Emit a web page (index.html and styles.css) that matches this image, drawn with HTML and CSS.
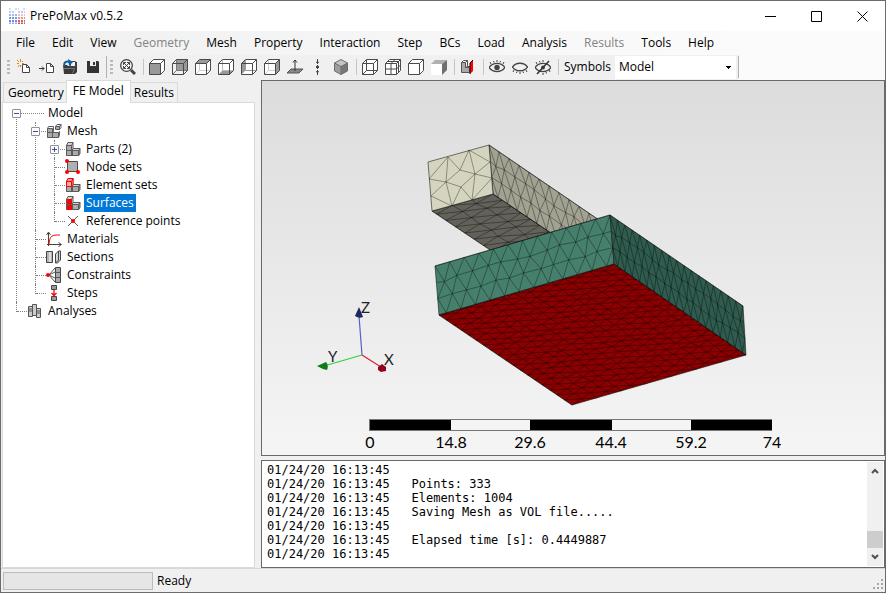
FILE: index.html
```html
<!DOCTYPE html>
<html lang="en">
<head>
<meta charset="utf-8">
<title>PrePoMax v0.5.2</title>
<link rel="stylesheet" href="styles.css">
</head>
<body>
<svg class="defs" aria-hidden="true">
  <defs>
    <symbol id="cube-frame" viewBox="0 0 16 16">
      <path d="M.5 4.500h11v11h-11zM.5 4.500l4-4h11v11l-4 4M11.500 4.500l4-4" fill="none" stroke="#4a4a4a"/>
    </symbol>
    <symbol id="blocks" viewBox="0 0 16 16">
      <path d="M1 4h6v5h7v6H1z" fill="#ababab"/>
      <path d="M1 4l2-3h5L7 4zM7 4l1-3v6L7 9zM7 9l2-2h6l-1 2z" fill="#d4d4d4"/>
      <path d="M14 9l1-2v6l-1 2z" fill="#888"/>
      <path d="M1.500 4.500h5v5h7v5h-12zM1.500 9.500h5v5M7.500 10v4M1.500 4.500l1.500-3h5v6l-1 2M6.500 4.500l1.500-3M8 7.500h7v5l-1.500 2M13.500 9.500l1.500-2" fill="none" stroke="#5a5a5a"/>
    </symbol>
  </defs>
</svg>
<div class="window">
  <header class="titlebar">
    <svg class="logo" viewBox="0 0 16 16" aria-hidden="true">
      <g stroke-width="2" stroke-dasharray="2 1" fill="none">
        <path d="M0 1h2M6 1h4M14 1h2" stroke="#d9dcf2"/>
        <path d="M0 4h5M9 4h7" stroke="#c3cbee"/>
        <path d="M0 7h8" stroke="#a0b6ec"/><path d="M9 7h7" stroke="#f0c0bd"/>
        <path d="M0 10h8" stroke="#7898e4"/><path d="M9 10h7" stroke="#e39590"/>
        <path d="M0 13h8" stroke="#688de4"/><path d="M9 13h7" stroke="#d8635c"/>
        <path d="M0 15.500h8" stroke="#96aff0"/><path d="M9 15.500h7" stroke="#cc5a52"/>
      </g>
    </svg>
    <h1 class="title">PrePoMax v0.5.2</h1>
    <button class="caption" aria-label="Minimize"><svg viewBox="0 0 11 11"><path d="M0 5.500h11"/></svg></button>
    <button class="caption" aria-label="Maximize"><svg viewBox="0 0 11 11"><path d="M.5.5h10v10H.5z"/></svg></button>
    <button class="caption" aria-label="Close"><svg viewBox="0 0 11 11"><path d="M.5.5l10 10M10.500.5l-10 10"/></svg></button>
  </header>

  <nav class="menubar">
    <button>File</button><button>Edit</button><button>View</button><button disabled>Geometry</button><button>Mesh</button><button>Property</button><button>Interaction</button><button>Step</button><button>BCs</button><button>Load</button><button>Analysis</button><button disabled>Results</button><button>Tools</button><button>Help</button>
  </nav>

  <div class="toolbar">
    <div class="strip">
      <span class="grip"></span>
      <button class="tool" aria-label="New"><svg viewBox="0 0 16 16"><path d="M6.500 5.500h4l3 3v5h-7zM10.500 5.500v3h3" fill="#fff" stroke="#444"/><path d="M4.500 0v3M1 4.500h2M7 2L6 3M1 1l2 2M2 8l1.500-2M8 4.500h-2M4.500 6v2" stroke="#d18a28" fill="none"/></svg></button>
      <button class="tool" aria-label="Import"><svg viewBox="0 0 16 16"><path d="M7.500 4.500h4l3 3v6h-7zM11.500 4.500v3h3" fill="#fff" stroke="#444"/><path d="M0 9.500h5M3 7.500l2 2-2 2" stroke="#333" fill="none"/></svg></button>
      <button class="tool" aria-label="Open"><svg viewBox="0 0 16 16"><path d="M1 6h4l1 1h7V3h2v10l-2 2H2z" fill="#3a3a3a"/><path d="M2 9.500h10.500l-2 5" fill="none" stroke="#777"/><path d="M8.500 2.500h5v5h-5z" fill="#f0f0f0" stroke="#444"/><path d="M2.500 7c-1-4 2-5 5-4" fill="none" stroke="#1260a8" stroke-width="2"/><path d="M6 0l5 3-4 4z" fill="#1260a8"/></svg></button>
      <button class="tool" aria-label="Save"><svg viewBox="0 0 16 16"><path d="M2 2h11l1 1v11H2z" fill="#333"/><path d="M5 2h6v5H5z" fill="#f0f0f0"/><path d="M8 3h2v3H8z" fill="#333"/></svg></button>
      <span class="strip-end"></span>
    </div>
    <div class="strip">
      <span class="grip"></span>
      <button class="tool" aria-label="Zoom to fit"><svg viewBox="0 0 16 16"><circle cx="6.500" cy="6.500" r="5.800" fill="#f4f4f4" stroke="#444" stroke-width="1.300"/><path d="M11 11l4 4" stroke="#444" stroke-width="3"/><path d="M4 4l5 5M9 4L4 9M3.500 6V3.500H6M7 3.500h2.500V6M9.500 7v2.500H7M6 9.500H3.500V7" fill="none" stroke="#444"/></svg></button>
      <span class="sep"></span>
      <button class="tool" aria-label="Front view"><svg viewBox="0 0 16 16"><path d="M.5 4.500l4-4h11v11l-4 4" fill="#fff"/><path d="M.5 4.500h11v11H.5z" fill="#999"/><use href="#cube-frame"/></svg></button>
      <button class="tool" aria-label="Back view"><svg viewBox="0 0 16 16"><path d="M4.500.5h11v11h-11z" fill="#999"/><path d="M4.500.5v11h11M4.500 11.500l-4 4" stroke="#777" fill="none"/><use href="#cube-frame"/></svg></button>
      <button class="tool" aria-label="Top view"><svg viewBox="0 0 16 16"><path d="M.5 4.500h11l4-4v11l-4 4H.5z" fill="#fff"/><path d="M.5 4.500l4-4h11l-4 4z" fill="#999"/><path d="M4.500 5v6.500h11M4.500 11.500l-4 4" stroke="#ccc" fill="none"/><use href="#cube-frame"/></svg></button>
      <button class="tool" aria-label="Bottom view"><svg viewBox="0 0 16 16"><path d="M.5 4.500l4-4h11v11l-4 4H.5z" fill="#fff"/><path d="M.5 15.500l4-4h11l-4 4z" fill="#999"/><path d="M4.500 1v10.500h11" stroke="#bbb" fill="none"/><use href="#cube-frame"/></svg></button>
      <button class="tool" aria-label="Left view"><svg viewBox="0 0 16 16"><path d="M.5 4.500l4-4h11v11l-4 4H.5z" fill="#fff"/><path d="M.5 15.500v-11l4-4v11z" fill="#999"/><path d="M4.500 1v10.500h11" stroke="#999" fill="none"/><use href="#cube-frame"/></svg></button>
      <button class="tool" aria-label="Right view"><svg viewBox="0 0 16 16"><path d="M.5 4.500l4-4h11v11l-4 4H.5z" fill="#fff"/><path d="M11.500 15.500v-11l4-4v11z" fill="#999"/><path d="M4.500 1v10.500h7M4.500 11.500l-4 4" stroke="#ccc" fill="none"/><use href="#cube-frame"/></svg></button>
      <button class="tool" aria-label="Normal view"><svg viewBox="0 0 16 16"><path d="M0 14l4-4h12l-4 4z" fill="#888" stroke="#555"/><path d="M8 12V1M6 3.500L8 1l2 2.500" fill="none" stroke="#333"/></svg></button>
      <button class="tool" aria-label="Vertical view"><svg viewBox="0 0 16 16"><path d="M7.500 0v16" stroke="#444" stroke-dasharray="5 1 4 1"/><path d="M6 4l1.500-3L9 4zM6 12l1.500 3L9 12zM6 7h3v2H6z" fill="#444"/></svg></button>
      <button class="tool" aria-label="Isometric view"><svg viewBox="0 0 16 16"><path d="M8 .5l6.500 3.500L8 7.500 1.500 4z" fill="#c4c4c4"/><path d="M1.500 4L8 7.500v8L1.500 12z" fill="#9d9d9d"/><path d="M14.500 4L8 7.500v8l6.500-3.500z" fill="#777"/><path d="M8 .5l6.500 3.500v8L8 15.500 1.500 12V4zM1.500 4L8 7.500 14.500 4M8 7.500v8" fill="none" stroke="#6c6c6c"/></svg></button>
      <span class="sep"></span>
      <button class="tool" aria-label="Wireframe"><svg viewBox="0 0 16 16"><path d="M.5 4.500l4-4h11v11l-4 4H.5z" fill="#fff"/><path d="M4.500.5v11h11M4.500 11.500l-4 4" fill="none" stroke="#4a4a4a"/><use href="#cube-frame"/></svg></button>
      <button class="tool" aria-label="Element edges"><svg viewBox="0 0 16 16"><path d="M.5 4.500l4-4h11v11l-4 4H.5z" fill="#fff"/><path d="M6 4.500v11M.5 10h11l4-4M2.500 2.500h11v11M10 .5l-4 4" fill="none" stroke="#4a4a4a"/><use href="#cube-frame"/></svg></button>
      <button class="tool" aria-label="Model edges"><svg viewBox="0 0 16 16"><path d="M.5 4.500l4-4h11v11l-4 4H.5z" fill="#fff"/><use href="#cube-frame"/></svg></button>
      <button class="tool" aria-label="No edges"><svg viewBox="0 0 16 16"><path d="M0 5h11v11H0z" fill="#fff"/><path d="M0 5l4-4h12l-5 4z" fill="#b0b0b0"/><path d="M11 5l5-4v10l-5 5z" fill="#707070"/></svg></button>
      <span class="sep"></span>
      <button class="tool" aria-label="Section view"><svg viewBox="0 0 16 16"><path d="M1.500 3.500h4v5h4v5h-8z" fill="#a8a8a8" stroke="#555"/><path d="M1.500 3.500l2-2h4v6h3M5.500 3.500l2-2M5.500 8.500l2-1" fill="none" stroke="#555"/><path d="M10 4l3-3v11l-3 3z" fill="#f00"/><path d="M10 15V4l3-3" fill="none" stroke="#200"/></svg></button>
      <span class="sep"></span>
      <button class="tool" aria-label="Hide"><svg viewBox="0 0 16 16"><path d="M0 8.500C4 3 12 3 16 8.500 12 14 4 14 0 8.500z" fill="#eee" stroke="#444" stroke-width="1.300"/><circle cx="8" cy="8.500" r="2.700" fill="#444"/><path d="M2 5L1 3M5 3.500L4.500 2M8 3V1M11 3.500l.5-1.500M14 5l1-2" stroke="#444"/></svg></button>
      <button class="tool" aria-label="Show"><svg viewBox="0 0 16 16"><path d="M.5 8C4 3 12 3 15.500 8 12 13 4 13 .5 8z" fill="none" stroke="#444" stroke-width="1.300"/><path d="M2 11l-1 2M5 12.500L4.500 14M8 13v2M11 12.500l.5 1.500M14 11l1 2" stroke="#444"/></svg></button>
      <button class="tool" aria-label="Invert visibility"><svg viewBox="0 0 16 16"><path d="M0 8.500C4 3 12 3 16 8.500 12 14 4 14 0 8.500z" fill="none" stroke="#444" stroke-width="1.300"/><circle cx="8" cy="8.500" r="2" fill="#444"/><path d="M2 5L1 3M5 3.500L4.500 2M8 3V1M14 11l1 2M11 13l.5 1.500M8 14v2" stroke="#444"/><path d="M14 2L2 15" stroke="#333" stroke-width="1.500"/></svg></button>
      <span class="sep"></span>
      <label for="symbols">Symbols</label>
      <select id="symbols"><option>Model</option></select>
      <span class="strip-end"></span>
    </div>
  </div>

  <main class="workspace">
    <aside class="side">
      <div class="tabs" role="tablist">
        <button role="tab" aria-selected="false">Geometry</button>
        <button role="tab" aria-selected="true">FE Model</button>
        <button role="tab" aria-selected="false">Results</button>
      </div>
      <div class="tree-pane">
        <ul class="tree">
          <li><div class="node wide"><button class="toggle" aria-label="Collapse"></button><span class="icon"></span><span class="label">Model</span></div>
            <ul>
              <li><div class="node"><button class="toggle" aria-label="Collapse"></button>
                <svg class="icon" viewBox="0 0 16 16"><path d="M1 5.500h5v4h6v5H1zM10 3h4v4h-4z" fill="#aaa"/><path d="M1.500 5.500h5v4h6v5h-11zM1.500 9.500h5v5M1.500 5.500l1-2h5v5l-1 1M12.500 9.500l1-1v4l-1 2M9.500 3.500h4v3h-4zM9.500 3.500l1.500-2h4v3l-1.500 2M13.500 3.500l1.500-2" fill="none" stroke="#5a5a5a"/></svg>
                <span class="label">Mesh</span></div>
                <ul>
                  <li><div class="node"><button class="toggle closed" aria-label="Expand"></button><svg class="icon" viewBox="0 0 16 16"><use href="#blocks"/></svg><span class="label">Parts (2)</span></div></li>
                  <li><div class="node"><svg class="icon" viewBox="0 0 16 16"><path d="M2.500 2.500h10v10h-10z" fill="#b0b0b0" stroke="#4b4b4b"/><g fill="#f00"><circle cx="2" cy="2" r="2"/><circle cx="2" cy="13" r="2"/><circle cx="13" cy="13" r="2"/></g></svg><span class="label">Node sets</span></div></li>
                  <li><div class="node"><svg class="icon" viewBox="0 0 16 16"><use href="#blocks"/><path d="M1 4l2-3h5v6L7 9H1z" fill="#ffaaaa"/><path d="M1.500 4.500h5v5h-5zM1.500 4.500l1.500-3h5v6l-1.500 2M6.500 4.500l1.500-3" fill="none" stroke="#f00"/></svg><span class="label">Element sets</span></div></li>
                  <li><div class="node selected"><svg class="icon" viewBox="0 0 16 16"><use href="#blocks"/><path d="M2 4h5v5H2zM2 10h5v5H2z" fill="#f00"/></svg><span class="label">Surfaces</span></div></li>
                  <li><div class="node"><svg class="icon" viewBox="0 0 16 16"><path d="M3 3l10 10M13 3L3 13" stroke="#555"/><circle cx="8" cy="8" r="2" fill="#f00"/></svg><span class="label">Reference points</span></div></li>
                </ul>
              </li>
              <li><div class="node"><svg class="icon" viewBox="0 0 16 16"><path d="M2.500 15V2M.5 4l2-3 2 3M1 13.500h14M12.500 11.500l3 2-3 2" fill="none" stroke="#444"/><path d="M3 13C4 4 6 4 14 4" fill="none" stroke="#f00"/></svg><span class="label">Materials</span></div></li>
              <li><div class="node"><svg class="icon" viewBox="0 0 16 16"><path d="M.5 2.500h6v11h-6z" fill="#b5b5b5" stroke="#444"/><path d="M3 3h2v10H3z" fill="#ddd"/><path d="M9.500 5l3-3v9l-3 3zM12.500 2h2v9l-3 3h-2" fill="#d5d5d5" stroke="#444"/></svg><span class="label">Sections</span></div></li>
              <li><div class="node"><svg class="icon" viewBox="0 0 16 16"><path d="M9.500.5h5v15h-5z" fill="#aaa" stroke="#444"/><path d="M9 5.500h6M9 10.500h6M9 1L3 8l6 7M3 8l6-3M3 8l6 3" stroke="#555" fill="none"/><circle cx="2" cy="8" r="2" fill="#f00"/></svg><span class="label">Constraints</span></div></li>
              <li><div class="node"><svg class="icon" viewBox="0 0 16 16"><path d="M5.500.5h5v4h-5zM5.500 11.500h5v4h-5z" fill="#999" stroke="#444"/><path d="M8 5v5M5.500 8L8 10.500 10.500 8" fill="none" stroke="#f00" stroke-width="1.300"/></svg><span class="label">Steps</span></div></li>
            </ul>
          </li>
          <li><div class="node"><svg class="icon" viewBox="0 0 16 16"><g fill="#ccc" stroke="#555"><path d="M5.500 1.500h4v11h-4zM1.500 3.500h4v10h-4zM9.500 5.500h4v9h-4z"/><path d="M2 6h3M2 8h3M10 8h3M10 10h3"/></g></svg><span class="label">Analyses</span></div></li>
        </ul>
      </div>
    </aside>

    <div class="content">
      <section class="viewport">
        <svg class="scene" viewBox="262 81 622 374" role="img" aria-label="Finite element mesh">
          <g id="model"></g>
          <g class="axes">
            <path d="M362 355L359 316" stroke="#5560c8"/>
            <path d="M362 355l-38 11" stroke="#30d040"/>
            <path d="M362 355l19 12" stroke="#d82040"/>
            <path d="M359 307l-4 9q4 3 8 1z" fill="#1c2766"/>
            <path d="M317 366l9-4q3 3 1 8l-4-1z" fill="#137a1c"/>
            <path d="M378 367l4-3 4 3v4l-5 1-3-2z" fill="#95001c"/>
            <text x="361" y="313">Z</text>
            <text x="328" y="362">Y</text>
            <text x="384" y="365">X</text>
          </g>
          <g class="scale">
            <rect x="369.500" y="419.500" width="402" height="11" fill="#f4f4f4" stroke="#777"/>
            <path d="M370 420h81v10h-81zM530 420h82v10h-82zM691 420h81v10h-81z"/>
            <text x="370" y="448">0</text><text x="451" y="448">14.8</text><text x="530" y="448">29.6</text><text x="611" y="448">44.4</text><text x="691" y="448">59.2</text><text x="772" y="448">74</text>
          </g>
        </svg>
      </section>
      <section class="log">
        <textarea readonly aria-label="Output">01/24/20 16:13:45
01/24/20 16:13:45   Points: 333
01/24/20 16:13:45   Elements: 1004
01/24/20 16:13:45   Saving Mesh as VOL file.....
01/24/20 16:13:45
01/24/20 16:13:45   Elapsed time [s]: 0.4449887
01/24/20 16:13:45</textarea>
        <div class="scrollbar">
          <button aria-label="Scroll up"><svg viewBox="0 0 8 6"><path d="M1 5l3-3 3 3"/></svg></button>
          <span class="thumb"></span>
          <button aria-label="Scroll down"><svg viewBox="0 0 8 6"><path d="M1 1l3 3 3-3"/></svg></button>
        </div>
      </section>
    </div>
  </main>

  <footer class="status">
    <progress value="0" max="100" aria-label="Progress"></progress>
    <span>Ready</span>
    <svg class="size-grip" viewBox="0 0 11 11" aria-hidden="true"><path d="M8 0h2v2H8zM4 4h2v2H4zM8 4h2v2H8zM0 8h2v2H0zM4 8h2v2H4zM8 8h2v2H8z" fill="#a8a8a8"/></svg>
  </footer>
</div>
<script src="mesh.js"></script>
</body>
</html>
```
FILE: styles.css
```css
* { box-sizing: border-box; }
body { margin: 0; font: 12px/18px "Open Sans", "Noto Sans", sans-serif; color: #000; }
button { font: inherit; color: inherit; background: none; border: 0; padding: 0; margin: 0; }
ul { list-style: none; margin: 0; padding: 0; }
.defs { position: absolute; width: 0; height: 0; }

.window { display: flex; flex-direction: column; height: 100vh; border: 1px solid #6b6b6b; background: #f0f0f0; overflow: hidden; }

.titlebar { display: flex; align-items: center; height: 30px; flex: none; background: #fff; padding-left: 8px; }
.logo { width: 16px; height: 16px; margin-right: 5px; }
.title { font-size: 12px; font-weight: 400; margin: 0; flex: 1; }
.caption { width: 46px; height: 28px; display: grid; place-items: center; }
.caption svg { width: 11px; height: 11px; fill: none; stroke: #000; }

.menubar, .toolbar { flex: none; display: flex; background: linear-gradient(90deg, #f0f0f0, #fbfbfb 85%); }
.menubar { height: 24px; padding-left: 7px; }
.menubar button { padding: 0 8px; }
.menubar button + button { padding-left: 9px; }
.menubar button:disabled { color: #838383; }

.toolbar { height: 25px; }
.strip { display: flex; flex: none; align-items: center; background: #f0f0f0; padding-bottom: 1px; }
.grip { width: 3px; height: 15px; margin: 0 2px 0 6px; background: repeating-linear-gradient(#b8b8b8 0 2px, transparent 2px 4px); }
.strip + .strip .grip { margin: 0 3px; }
.tool { width: 23px; height: 24px; display: grid; place-items: center; }
.tool svg { width: 16px; height: 16px; }
.sep { width: 6px; height: 16px; border-left: 1px solid #c4c4c4; margin-left: 4px; margin-right: -4px; }
.strip-end { width: 3px; height: 22px; border-right: 1px solid #b0b0b0; }
.strip label { margin: 0 4px; }
select {
  width: 121px; height: 23px; border: 0; padding: 0 4px; font: inherit; color: #000; border-radius: 0; appearance: none;
  background: linear-gradient(#000, #000) no-repeat 111px 10px / 5px 1px,
    linear-gradient(#000, #000) no-repeat 112px 11px / 3px 1px,
    linear-gradient(#000, #000) no-repeat 113px 12px / 1px 1px, #fff;
}

.workspace { flex: 1; min-height: 0; display: flex; gap: 6px; }
.side { width: 254px; flex: none; display: flex; flex-direction: column; padding-left: 1px; }
.tabs { display: flex; align-items: flex-end; height: 22px; padding-left: 1px; flex: none; }
.tabs button { height: 20px; padding: 0 4px; border: 1px solid #dadada; border-bottom: 0; white-space: nowrap; }
.tabs button + button { padding: 0 3px; }
.tabs button:first-child { padding: 0 2px 0 4px; }
.tabs button[aria-selected="true"] { height: 23px; padding: 0 6px 2px; background: #fff; position: relative; margin: 0 -1px -1px; }
.tree-pane { flex: 1; background: #fff; border: 1px solid #dadada; padding: 1px 0 0 4px; overflow: hidden; }

.tree li { position: relative; }
.tree li::before { content: ""; position: absolute; left: 9px; top: 0; bottom: 0; border-left: 1px dotted #808080; }
.tree > li:first-child::before { top: 9px; }
.tree li:last-child::before { bottom: auto; height: 10px; }
.tree li > ul { padding-left: 19px; }
.node { position: relative; height: 18px; display: flex; align-items: center; padding-left: 20px; }
.node::before { content: ""; position: absolute; left: 10px; top: 9px; width: 10px; border-top: 1px dotted #808080; }
.node.wide::before { width: 27px; }
.icon { width: 16px; height: 16px; margin-right: 3px; flex: none; }
.label { padding: 0 2px; white-space: nowrap; }
.selected .label { background: #0078d7; color: #fff; }
.toggle { position: absolute; left: 5px; top: 5px; width: 9px; height: 9px; border: 1px solid #919191; border-radius: 1px;
  background: linear-gradient(#3550a8, #3550a8) no-repeat 1px 3px / 5px 1px, #fcfcfc; }
.toggle.closed { background: linear-gradient(#3550a8, #3550a8) no-repeat 1px 3px / 5px 1px, linear-gradient(#3550a8, #3550a8) no-repeat 3px 1px / 1px 5px, #fcfcfc; }

.content { flex: 1; min-width: 0; display: flex; flex-direction: column; gap: 4px; }
.viewport { flex: 1; min-height: 0; border: 1px solid #696969; background: linear-gradient(#dcdcdc, #f5f5f5); }
.scene { display: block; width: 100%; height: 100%; }
.mesh { fill: none; stroke: #000; stroke-opacity: .5; stroke-width: .7; }
.outline { fill: none; stroke: #111; stroke-opacity: .8; stroke-width: .7; }
.axes path { stroke-width: 1.2; }
.axes text { font: 15px Lato, sans-serif; fill: #222; }
.scale text { font: 16px Lato, sans-serif; text-anchor: middle; }

.log { flex: none; height: 108px; display: flex; border: 1px solid #696969; background: #fff; padding: 1px; }
.log textarea { flex: 1; min-width: 0; border: 0; outline: 0; resize: none; overflow: hidden; padding: 1px 4px; font: 12px/14px "DejaVu Sans Mono", monospace; color: #000; background: #fff; }
.scrollbar { width: 16px; display: flex; flex-direction: column; background: #f0f0f0; }
.scrollbar button { height: 18px; display: grid; place-items: center; }
.scrollbar svg { width: 8px; height: 6px; fill: none; stroke: #505050; stroke-width: 2; }
.thumb { height: 17px; margin-top: auto; background: #cdcdcd; }

.status { flex: none; height: 24px; display: flex; align-items: center; padding-left: 2px; border-top: 1px solid #d7d7d7; }
progress { appearance: none; width: 150px; height: 18px; border: 1px solid #bcbcbc; background: #e6e6e6; margin-right: 4px; }
progress::-webkit-progress-bar { background: #e6e6e6; }
.size-grip { width: 11px; height: 11px; margin: 8px 1px 0 auto; }
```
FILE: mesh.js
```js
// Draws each visible face of the two parts with its surface triangulation.
const NS = "http://www.w3.org/2000/svg";
const model = document.getElementById("model");

function add(tag, attrs) {
  const el = document.createElementNS(NS, tag);
  for (const key in attrs) el.setAttribute(key, attrs[key]);
  model.appendChild(el);
}

// Deterministic noise in the range -0.5 .. 0.5.
function noise(a, b) {
  const s = Math.sin(a * 12.9898 + b * 78.233) * 43758.5453;
  return s - Math.floor(s) - 0.5;
}

// Corners run a -> b along u and a -> d along v.
function face(a, b, c, d, fill, cols, rows) {
  add("polygon", { points: [a, b, c, d].join(" "), fill });
  const grid = [];
  for (let r = 0; r <= rows; r++) {
    const row = [];
    const odd = r % 2;
    const count = odd ? cols + 2 : cols + 1;
    for (let i = 0; i < count; i++) {
      let u = odd ? Math.min(Math.max(i - 0.5, 0), cols) : i;
      let v = r;
      const inner = r > 0 && r < rows && i > 0 && i < count - 1;
      if (inner) {
        u += noise(r, i) * 0.22;
        v += noise(i, r + 7) * 0.22;
      }
      u /= cols;
      v /= rows;
      row.push([0, 1].map(k =>
        (1 - v) * ((1 - u) * a[k] + u * b[k]) + v * ((1 - u) * d[k] + u * c[k])));
    }
    grid.push(row);
  }
  let path = "";
  const line = (p, q) => { path += `M${p[0].toFixed(1)} ${p[1].toFixed(1)}L${q[0].toFixed(1)} ${q[1].toFixed(1)}`; };
  grid.forEach((row, r) => {
    for (let i = 1; i < row.length; i++) line(row[i - 1], row[i]);
    if (r % 2) {
      [grid[r - 1], grid[r + 1]].forEach(other => {
        if (!other) return;
        for (let i = 1; i <= cols; i++) {
          line(row[i], other[i - 1]);
          line(row[i], other[i]);
        }
      });
    }
  });
  add("path", { d: path, class: "mesh" });
  add("polygon", { points: [a, b, c, d].join(" "), class: "outline" });
}

// Upper part
face([493, 194], [596, 263], [535, 280], [432, 211], "#62625a", 11, 3);
face([489, 145], [599, 220], [600, 266], [493, 194], "#a2a292", 11, 3);
add("polygon", { points: "428,162 489,145 493,194 432,211", fill: "#d5d5bf" });
const end = {
  A: [428, 162], B: [448, 157], C: [469, 150], D: [489, 145],
  E: [429, 179], F: [431, 196], G: [432, 211], H: [490, 162],
  I: [492, 178], J: [493, 194], K: [452, 206], L: [472, 200],
  M: [460, 170], N: [475, 174], O: [446, 182], P: [461, 187]
};
add("path", {
  d: "BE BO BM CM CN CH NH NI NL NM NP MO OE OF OK OP PK PL FK LI".split(" ")
    .map(e => `M${end[e[0]]}L${end[e[1]]}`).join(""),
  class: "mesh"
});
add("polygon", { points: "428,162 489,145 493,194 432,211", class: "outline" });

// Lower part
face([614, 264], [746, 355], [572, 405], [439, 315], "#8b0000", 18, 14);
face([435, 266], [610, 215], [614, 264], [439, 315], "#46806c", 12, 3);
face([610, 215], [743, 306], [746, 355], [614, 264], "#2f5c4e", 18, 3);
```
